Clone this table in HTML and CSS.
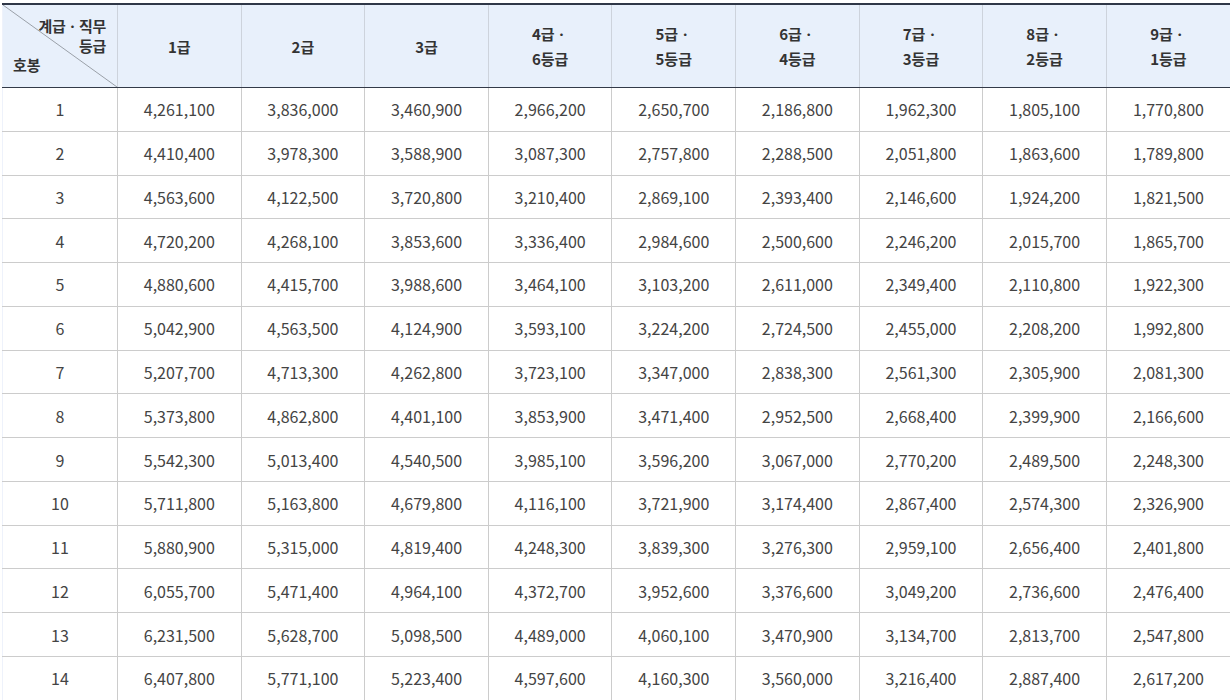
FILE: index.html
```html
<!DOCTYPE html>
<html lang="ko">
<head>
<meta charset="utf-8">
<link rel="stylesheet" href="styles.css">
</head>
<body>
<table class="pay">
  <thead>
    <tr>
      <th class="corner">
        <svg class="diag" viewBox="0 0 100 100" preserveAspectRatio="none"><line x1="0" y1="0" x2="100" y2="100" vector-effect="non-scaling-stroke"/></svg>
        <span class="c-top">계급ㆍ직무<br>등급</span>
        <span class="c-bot">호봉</span>
      </th>
      <th>1급</th>
      <th>2급</th>
      <th>3급</th>
      <th>4급ㆍ<br>6등급</th>
      <th>5급ㆍ<br>5등급</th>
      <th>6급ㆍ<br>4등급</th>
      <th>7급ㆍ<br>3등급</th>
      <th>8급ㆍ<br>2등급</th>
      <th>9급ㆍ<br>1등급</th>
    </tr>
  </thead>
  <tbody>
    <tr><td>1</td><td>4,261,100</td><td>3,836,000</td><td>3,460,900</td><td>2,966,200</td><td>2,650,700</td><td>2,186,800</td><td>1,962,300</td><td>1,805,100</td><td>1,770,800</td></tr>
    <tr><td>2</td><td>4,410,400</td><td>3,978,300</td><td>3,588,900</td><td>3,087,300</td><td>2,757,800</td><td>2,288,500</td><td>2,051,800</td><td>1,863,600</td><td>1,789,800</td></tr>
    <tr><td>3</td><td>4,563,600</td><td>4,122,500</td><td>3,720,800</td><td>3,210,400</td><td>2,869,100</td><td>2,393,400</td><td>2,146,600</td><td>1,924,200</td><td>1,821,500</td></tr>
    <tr><td>4</td><td>4,720,200</td><td>4,268,100</td><td>3,853,600</td><td>3,336,400</td><td>2,984,600</td><td>2,500,600</td><td>2,246,200</td><td>2,015,700</td><td>1,865,700</td></tr>
    <tr><td>5</td><td>4,880,600</td><td>4,415,700</td><td>3,988,600</td><td>3,464,100</td><td>3,103,200</td><td>2,611,000</td><td>2,349,400</td><td>2,110,800</td><td>1,922,300</td></tr>
    <tr><td>6</td><td>5,042,900</td><td>4,563,500</td><td>4,124,900</td><td>3,593,100</td><td>3,224,200</td><td>2,724,500</td><td>2,455,000</td><td>2,208,200</td><td>1,992,800</td></tr>
    <tr><td>7</td><td>5,207,700</td><td>4,713,300</td><td>4,262,800</td><td>3,723,100</td><td>3,347,000</td><td>2,838,300</td><td>2,561,300</td><td>2,305,900</td><td>2,081,300</td></tr>
    <tr><td>8</td><td>5,373,800</td><td>4,862,800</td><td>4,401,100</td><td>3,853,900</td><td>3,471,400</td><td>2,952,500</td><td>2,668,400</td><td>2,399,900</td><td>2,166,600</td></tr>
    <tr><td>9</td><td>5,542,300</td><td>5,013,400</td><td>4,540,500</td><td>3,985,100</td><td>3,596,200</td><td>3,067,000</td><td>2,770,200</td><td>2,489,500</td><td>2,248,300</td></tr>
    <tr><td>10</td><td>5,711,800</td><td>5,163,800</td><td>4,679,800</td><td>4,116,100</td><td>3,721,900</td><td>3,174,400</td><td>2,867,400</td><td>2,574,300</td><td>2,326,900</td></tr>
    <tr><td>11</td><td>5,880,900</td><td>5,315,000</td><td>4,819,400</td><td>4,248,300</td><td>3,839,300</td><td>3,276,300</td><td>2,959,100</td><td>2,656,400</td><td>2,401,800</td></tr>
    <tr><td>12</td><td>6,055,700</td><td>5,471,400</td><td>4,964,100</td><td>4,372,700</td><td>3,952,600</td><td>3,376,600</td><td>3,049,200</td><td>2,736,600</td><td>2,476,400</td></tr>
    <tr><td>13</td><td>6,231,500</td><td>5,628,700</td><td>5,098,500</td><td>4,489,000</td><td>4,060,100</td><td>3,470,900</td><td>3,134,700</td><td>2,813,700</td><td>2,547,800</td></tr>
    <tr><td>14</td><td>6,407,800</td><td>5,771,100</td><td>5,223,400</td><td>4,597,600</td><td>4,160,300</td><td>3,560,000</td><td>3,216,400</td><td>2,887,400</td><td>2,617,200</td></tr>
  </tbody>
</table>
</body>
</html>
```

FILE: styles.css
```css
html, body {
  margin: 0;
  padding: 0;
  background: #ffffff;
}
body {
  padding: 3px 1px 0 2px;
  font-family: "Noto Sans CJK KR", "Noto Sans", sans-serif;
  color: #444444;
}
.pay {
  width: 1228px;
  border-collapse: collapse;
  table-layout: fixed;
  border-top: 2px solid #2f3747;
}
.pay th {
  background: #e8f0fb;
  color: #333333;
  font-size: 15px;
  font-weight: 700;
  line-height: 25px;
  height: 82px;
  padding: 0;
  text-align: center;
  vertical-align: middle;
  border-left: 1px solid #cdd3dc;
  border-bottom: 1px solid #333a48;
}
.pay th:first-child {
  border-left: 1px solid #eef2fb;
  width: 114px;
}
.pay th.corner {
  position: relative;
  padding: 0;
}
.diag {
  position: absolute;
  left: 0;
  top: 0;
  width: 100%;
  height: 100%;
}
.diag line {
  stroke: #9aa0a8;
  stroke-width: 1;
}
.c-top {
  position: absolute;
  right: 11px;
  top: 11px;
  text-align: right;
  line-height: 20px;
  letter-spacing: -0.3px;
}
.c-bot {
  position: absolute;
  left: 10px;
  bottom: 12px;
  line-height: 20px;
}
.pay td {
  height: 42.77px;
  padding: 0;
  text-align: center;
  vertical-align: middle;
  font-size: 16px;
  font-weight: 400;
  color: #444444;
  border-left: 1px solid #cccccc;
  border-bottom: 1px solid #cccccc;
}
.pay td:first-child {
  border-left: 1px solid #eef2fb;
}
```
